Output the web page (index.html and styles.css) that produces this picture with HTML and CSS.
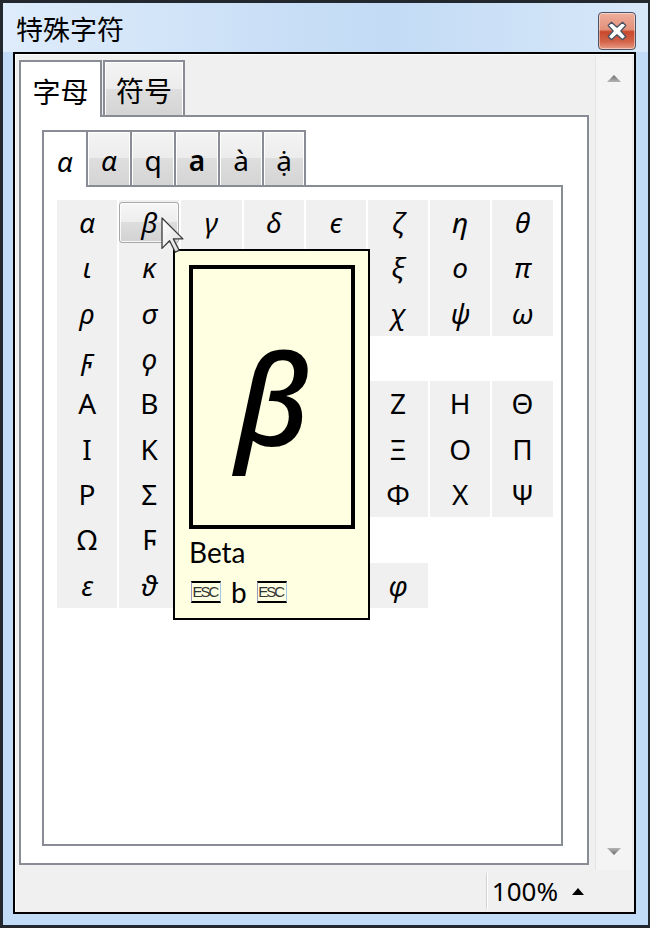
FILE: index.html
```html
<!DOCTYPE html>
<html lang="zh">
<head>
    <meta charset="UTF-8">
    <link rel="stylesheet" href="styles.css">
</head>
<body>

<div class="window">
    <div class="titlebar">
        <span class="title">特殊字符</span>
        <button class="close">
            <svg width="22" height="22" viewBox="0 0 20 20">
                <path d="M2 5 L5 2 L10 6.5 L15 2 L18 5 L13.5 10 L18 15 L15 18 L10 13.5 L5 18 L2 15 L6.5 10 Z" fill="#fff" stroke="#4a5162" stroke-width="1.2" stroke-linejoin="round"/>
            </svg>
        </button>
    </div>

    <div class="client">
        <div class="main">
            <div class="tabs">
                <div class="tabbar">
                    <div class="tab tab-a on">字母</div>
                    <div class="tab tab-b">符号</div>
                </div>
                <div class="panel">
                    <div class="subtabbar">
                        <div class="subtab on it">α</div>
                        <div class="subtab it">ɑ</div>
                        <div class="subtab">q</div>
                        <div class="subtab bold">a</div>
                        <div class="subtab">à</div>
                        <div class="subtab last">ạ̇</div>
                    </div>
                    <div class="subpanel">
                        <div class="grid">
                            <div class="cell it">α</div>
                            <div class="cell it hot"><span class="btn">β</span></div>
                            <div class="cell it">γ</div>
                            <div class="cell it">δ</div>
                            <div class="cell it">ϵ</div>
                            <div class="cell it">ζ</div>
                            <div class="cell it">η</div>
                            <div class="cell it">θ</div>

                            <div class="cell it">ι</div>
                            <div class="cell it">κ</div>
                            <div class="cell"></div>
                            <div class="cell"></div>
                            <div class="cell"></div>
                            <div class="cell it">ξ</div>
                            <div class="cell it">ο</div>
                            <div class="cell it">π</div>

                            <div class="cell it">ρ</div>
                            <div class="cell it">σ</div>
                            <div class="cell"></div>
                            <div class="cell"></div>
                            <div class="cell"></div>
                            <div class="cell it">χ</div>
                            <div class="cell it">ψ</div>
                            <div class="cell it">ω</div>

                            <div class="cell it">ϝ</div>
                            <div class="cell it">ϙ</div>
                            <div class="cell"></div>
                            <div class="cell"></div>
                            <div class="blank"></div>
                            <div class="blank"></div>
                            <div class="blank"></div>
                            <div class="blank"></div>

                            <div class="cell">Α</div>
                            <div class="cell">Β</div>
                            <div class="cell"></div>
                            <div class="cell"></div>
                            <div class="cell"></div>
                            <div class="cell">Ζ</div>
                            <div class="cell">Η</div>
                            <div class="cell">Θ</div>

                            <div class="cell">Ι</div>
                            <div class="cell">Κ</div>
                            <div class="cell"></div>
                            <div class="cell"></div>
                            <div class="cell"></div>
                            <div class="cell">Ξ</div>
                            <div class="cell">Ο</div>
                            <div class="cell">Π</div>

                            <div class="cell">Ρ</div>
                            <div class="cell">Σ</div>
                            <div class="cell"></div>
                            <div class="cell"></div>
                            <div class="cell"></div>
                            <div class="cell">Φ</div>
                            <div class="cell">Χ</div>
                            <div class="cell">Ψ</div>

                            <div class="cell">Ω</div>
                            <div class="cell">Ϝ</div>
                            <div class="cell"></div>
                            <div class="cell"></div>
                            <div class="cell"></div>
                            <div class="blank"></div>
                            <div class="blank"></div>
                            <div class="blank"></div>

                            <div class="cell it">ε</div>
                            <div class="cell it">ϑ</div>
                            <div class="cell"></div>
                            <div class="cell"></div>
                            <div class="cell"></div>
                            <div class="cell it">φ</div>
                            <div class="blank"></div>
                            <div class="blank"></div>

                            <div class="tooltip">
                                <div class="preview">β</div>
                                <div class="name">Beta</div>
                                <div class="keys">
                                    <span class="key">ESC</span>
                                    <span>b</span>
                                    <span class="key">ESC</span>
                                </div>
                            </div>

                            <svg class="cursor" width="24" height="38" viewBox="0 0 24 38">
                                <defs>
                                    <linearGradient id="cur" x1="0" y1="0" x2="1" y2="1">
                                        <stop offset="0" stop-color="#ffffff"/>
                                        <stop offset="1" stop-color="#dcdcdc"/>
                                    </linearGradient>
                                </defs>
                                <polygon points="1,1 1,31.4 8.6,23.8 14.3,35.2 18.1,33.3 12.4,21.9 21.9,21.9" fill="url(#cur)" stroke="#3a3a3a" stroke-width="1.3" stroke-linejoin="round"/>
                            </svg>
                        </div>
                    </div>
                </div>
            </div>

            <div class="scrollbar">
                <span class="arrow up"></span>
                <span class="arrow down"></span>
            </div>
        </div>

        <div class="statusbar">
            <span class="sep"></span>
            <span class="zoom">100%</span>
            <span class="caret"></span>
        </div>
    </div>
</div>

</body>
</html>
```

FILE: styles.css
```css
* {
    box-sizing: border-box;
}

body {
    margin: 0;
    background: #23282e;
    font-family: "Noto Sans", "DejaVu Sans", sans-serif;
    color: #000;
}

.window {
    position: relative;
    margin: 3px 2px 3px 3px;
    width: 645px;
    height: 922px;
    background: #c2dcf7;
    display: flex;
    flex-direction: column;
}

/* title bar */

.titlebar {
    height: 49px;
    flex-shrink: 0;
    display: flex;
    align-items: flex-start;
    justify-content: space-between;
    padding: 3px 12px 0 13px;
    background: linear-gradient(to right, #deecfb 0%, #c8def6 45%, #c3dbf5 60%, #d7e8f9 100%);
}

.title {
    font-family: "Noto Sans CJK SC", sans-serif;
    font-size: 27px;
    line-height: 46px;
}

.close {
    margin-top: 6px;
    width: 38px;
    height: 38px;
    padding: 0;
    border: 1px solid #4d5364;
    border-radius: 4px;
    background: linear-gradient(#eeae9b 0%, #e3907a 46%, #c9482b 52%, #d3654a 80%, #e89c85 100%);
    box-shadow: inset 0 0 0 1px rgba(255, 255, 255, 0.45);
    display: flex;
    align-items: center;
    justify-content: center;
}

/* client area */

.client {
    flex: 1;
    margin: 0 12px 11px 10px;
    border: 2px solid #000;
    background: #f0f0f0;
    box-shadow: inset 1px 1px 0 #fff;
    display: flex;
    flex-direction: column;
}

.main {
    height: 816px;
    display: flex;
    padding: 0 1px 0 4px;
}

.tabs {
    width: 570px;
    margin: 6px 0 5px;
    display: flex;
    flex-direction: column;
}

.tabbar {
    height: 55px;
    display: flex;
    align-items: flex-start;
}

.tab {
    height: 55px;
    border: 2px solid #898c94;
    border-bottom: 0;
    font-family: "Noto Sans CJK SC", sans-serif;
    font-size: 28px;
    display: flex;
    align-items: center;
    justify-content: center;
    padding-top: 3px;
    background: linear-gradient(#f4f4f4 0%, #ececec 50%, #dedede 50%, #d4d4d4 100%);
    box-shadow: inset 1px 1px 0 #fff, inset -1px 0 0 #fff;
}

.tab-a {
    width: 83px;
}

.tab-b {
    width: 82px;
    margin-left: 1px;
}

.tab.on,
.subtab.on {
    height: 57px;
    margin-bottom: -2px;
    background: #fff;
    box-shadow: none;
    position: relative;
    z-index: 1;
}

.panel {
    flex: 1;
    border: 2px solid #898c94;
    background: #fff;
    padding: 13px 24px 17px 21px;
    display: flex;
    flex-direction: column;
}

.subtabbar {
    height: 55px;
    display: flex;
    align-items: flex-start;
}

.subtab {
    width: 46px;
    height: 55px;
    margin-left: -2px;
    border: 2px solid #898c94;
    border-bottom: 0;
    font-size: 28px;
    line-height: 1;
    display: flex;
    align-items: center;
    justify-content: center;
    padding-top: 3px;
    background: linear-gradient(#f4f4f4 0%, #ececec 50%, #dedede 50%, #d4d4d4 100%);
    box-shadow: inset 1px 1px 0 #fff, inset -1px 0 0 #fff;
}

.subtab:first-child {
    margin-left: 0;
}

.subtab.last {
    width: 44px;
}

.subtab.bold {
    font-weight: 600;
}

.subpanel {
    flex: 1;
    border: 2px solid #898c94;
    padding: 13px;
}

/* character grid */

.grid {
    position: relative;
    display: grid;
    grid-template-columns: repeat(8, 60.2px);
    grid-auto-rows: 45.33px;
    column-gap: 2px;
}

.cell {
    background: #f0f0f0;
    font-size: 28px;
    line-height: 45.33px;
    text-align: center;
}

.it {
    font-style: italic;
}

.cell.hot {
    padding: 2px 0;
}

.btn {
    display: block;
    height: 100%;
    border: 1px solid #a8a8a8;
    border-radius: 3px;
    background: linear-gradient(#f7f7f7 0%, #ededed 50%, #dddddd 50%, #d2d2d2 100%);
    box-shadow: inset 0 0 0 1px rgba(255, 255, 255, 0.8);
    line-height: 39.33px;
}

/* hover tooltip */

.tooltip {
    position: absolute;
    left: 116px;
    top: 49px;
    width: 197px;
    height: 371px;
    border: 2px solid #000;
    background: #ffffe1;
    padding: 14px 0 0 14px;
    z-index: 2;
}

.preview {
    width: 166px;
    height: 264px;
    border: 4px solid #000;
    display: flex;
    align-items: center;
    justify-content: center;
    font-size: 126px;
    font-style: italic;
    font-weight: 500;
    line-height: 1;
}

.name {
    margin-top: 8px;
    font-family: Lato, "Noto Sans", sans-serif;
    font-size: 28px;
    line-height: 30px;
}

.keys {
    margin-top: 12px;
    height: 26px;
    padding-left: 2px;
    display: flex;
    align-items: center;
    gap: 10px;
    font-family: Lato, "Noto Sans", sans-serif;
    font-size: 28px;
    line-height: 26px;
}

.key {
    width: 30px;
    height: 22px;
    border-top: 2px solid #000;
    border-bottom: 2px solid #000;
    border-left: 1px solid #9c98c0;
    border-right: 1px solid #a4c8e4;
    font-family: "Liberation Sans", sans-serif;
    font-size: 15px;
    letter-spacing: -2px;
    line-height: 18px;
    text-align: center;
    color: #333;
    padding-right: 2px;
}

.cursor {
    position: absolute;
    left: 104px;
    top: 17px;
    z-index: 3;
}

/* scrollbar */

.scrollbar {
    width: 38px;
    margin: 3px 0 0 6px;
    background: #f4f4f4;
    border-left: 1px solid #e4e4e4;
    border-right: 1px solid #eaeaea;
    display: flex;
    flex-direction: column;
    justify-content: space-between;
    align-items: center;
    padding: 18px 0 15px;
}

.arrow {
    width: 14px;
    height: 7px;
}

.arrow.up {
    background: linear-gradient(#6e6e6e, #b4b4b4);
    clip-path: polygon(50% 0, 100% 100%, 0 100%);
}

.arrow.down {
    background: linear-gradient(#b4b4b4, #6e6e6e);
    clip-path: polygon(0 0, 100% 0, 50% 100%);
}

/* status bar */

.statusbar {
    flex: 1;
    display: flex;
    align-items: center;
    justify-content: flex-end;
    padding-right: 50px;
}

.sep {
    width: 2px;
    height: 36px;
    border-left: 1px solid #d2d2d2;
    border-right: 1px solid #fff;
    margin-right: 4px;
}

.zoom {
    font-size: 26px;
    line-height: 36px;
}

.caret {
    margin-left: 14px;
    width: 0;
    height: 0;
    border-left: 6px solid transparent;
    border-right: 6px solid transparent;
    border-bottom: 7px solid #000;
}
```
